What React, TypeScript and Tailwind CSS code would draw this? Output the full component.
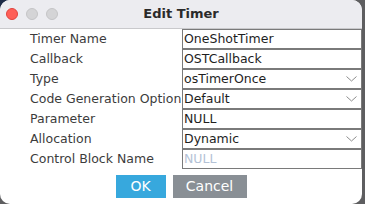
type Field = {
  label: string;
  value: string;
  select?: boolean;
  placeholder?: boolean;
};

const fields: Field[] = [
  { label: 'Timer Name', value: 'OneShotTimer' },
  { label: 'Callback', value: 'OSTCallback' },
  { label: 'Type', value: 'osTimerOnce', select: true },
  { label: 'Code Generation Option', value: 'Default', select: true },
  { label: 'Parameter', value: 'NULL' },
  { label: 'Allocation', value: 'Dynamic', select: true },
  { label: 'Control Block Name', value: 'NULL', placeholder: true },
];

function TrafficLights() {
  return (
    <div className="absolute left-[6px] top-[8px] flex gap-[8px]">
      <span className="h-[12px] w-[12px] rounded-full border border-[#e0443e] bg-[#fe5f57]" />
      <span className="h-[12px] w-[12px] rounded-full border border-[#c4c4c6] bg-[#d4d4d6]" />
      <span className="h-[12px] w-[12px] rounded-full border border-[#c4c4c6] bg-[#d4d4d6]" />
    </div>
  );
}

// thin mac-style popup chevron
function Chevron() {
  return (
    <svg width="11" height="6" viewBox="0 0 11 6" className="shrink-0">
      <path d="M0.5 0.5 L5.5 5 L10.5 0.5" fill="none" stroke="#8c8c8c" strokeWidth="1" />
    </svg>
  );
}

export default function App() {
  return (
    <div
      className="h-[204px] w-[365px] bg-[linear-gradient(160deg,#1d2b47_0%,#1d2b47_4%,#5e5e60_6%)]"
      style={{ fontFamily: '"DejaVu Sans", "Liberation Sans", sans-serif' }}
    >
      <div className="flex h-[204px] w-[362px] flex-col overflow-hidden rounded-[10px] bg-white">
        <div className="relative flex h-[29px] shrink-0 items-center justify-center border-b border-[#c9c9cc] bg-[#ececf0]">
          <TrafficLights />
          <span className="text-[13px] font-bold text-[#2a2a2a]">Edit Timer</span>
        </div>

        <div className="flex flex-col">
          {fields.map(f => (
            <div key={f.label} className="flex h-[20px] items-stretch">
              <div className="flex w-[182px] shrink-0 items-center pl-[30px] text-[12.5px] text-[#3c3c3c]">
                <span className="whitespace-nowrap">{f.label}</span>
              </div>
              <div className="flex flex-1 items-center border border-[#7a7a7a] bg-white pl-[1px] pr-[4px]">
                <span
                  className={`flex-1 text-[12.5px] ${f.placeholder ? 'text-[#b4c2d6]' : 'text-[#1e1e1e]'}`}
                >
                  {f.value}
                </span>
                {f.select && <Chevron />}
              </div>
            </div>
          ))}
        </div>

        <div className="flex justify-center gap-[7px] pt-[6px]">
          <button
            type="button"
            className="flex h-[23px] w-[50px] items-center justify-center bg-[#37a8dd] text-[14px] text-white"
          >
            OK
          </button>
          <button
            type="button"
            className="flex h-[23px] w-[74px] items-center justify-center bg-[#898f95] text-[14px] text-white"
          >
            Cancel
          </button>
        </div>
      </div>
    </div>
  );
}
